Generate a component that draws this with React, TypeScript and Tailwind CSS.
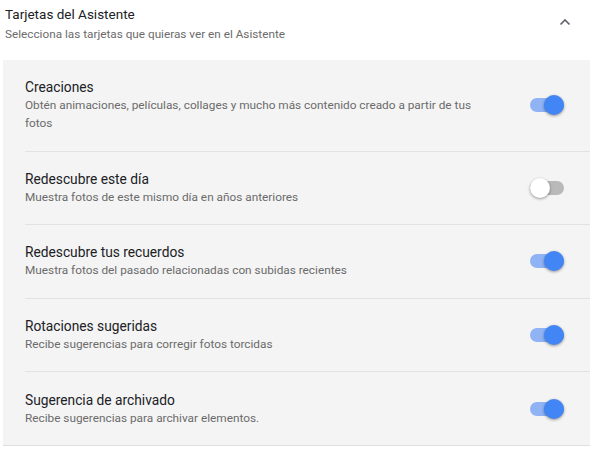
import React from "react";

const items = [
  { t: "Creaciones", d: "Obtén animaciones, películas, collages y mucho más contenido creado a partir de tus fotos", on: true },
  { t: "Redescubre este día", d: "Muestra fotos de este mismo día en años anteriores", on: false },
  { t: "Redescubre tus recuerdos", d: "Muestra fotos del pasado relacionadas con subidas recientes", on: true },
  { t: "Rotaciones sugeridas", d: "Recibe sugerencias para corregir fotos torcidas", on: true },
  { t: "Sugerencia de archivado", d: "Recibe sugerencias para archivar elementos.", on: true },
];

function Toggle({ on }: { on: boolean }) {
  return (
    <div className="relative w-[34px] h-[20px] flex items-center">
      <div className={`w-[34px] h-[14px] rounded-full ${on ? "bg-[#8fb3f4]" : "bg-[#b9b9b9]"}`} />
      <div
        className={`absolute top-0 w-[20px] h-[20px] rounded-full shadow-[0_1px_3px_rgba(0,0,0,0.4)] ${
          on ? "right-0 bg-[#4285f4]" : "left-0 bg-white"
        }`}
      />
    </div>
  );
}

export default function App() {
  return (
    <div className="w-[600px] h-[460px] bg-white" style={{ fontFamily: "Roboto, 'Liberation Sans', sans-serif" }}>
      <div className="flex items-start justify-between pl-[5px] pr-[29px] pt-[3px] h-[60px]">
        <div>
          <div className="text-[13.5px] leading-[22px] text-[#202124]">Tarjetas del Asistente</div>
          <div className="text-[11.75px] leading-[18px] text-[#6b6b6b]">Selecciona las tarjetas que quieras ver en el Asistente</div>
        </div>
        <svg width="12" height="8" viewBox="0 0 12 8" className="mt-[15px]">
          <path d="M1.5 6.5 L6 2 L10.5 6.5" fill="none" stroke="#5f6368" strokeWidth="1.6" />
        </svg>
      </div>
      <div className="ml-[3px] w-[587px] bg-[#f4f4f4] border-b border-[#e0e0e0] pl-[22px]">
        {items.map((it, i) => (
          <div
            key={i}
            className={`flex items-center justify-between pr-[26px] py-[18.3px] ${i < items.length - 1 ? "border-b border-[#e2e2e2]" : ""}`}
          >
            <div className="w-[460px]">
              <div className="text-[13.75px] leading-[18px] text-[#202124]">{it.t}</div>
              <div className="text-[11.8px] leading-[18px] text-[#6b6b6b]">{it.d}</div>
            </div>
            <Toggle on={it.on} />
          </div>
        ))}
      </div>
    </div>
  );
}
